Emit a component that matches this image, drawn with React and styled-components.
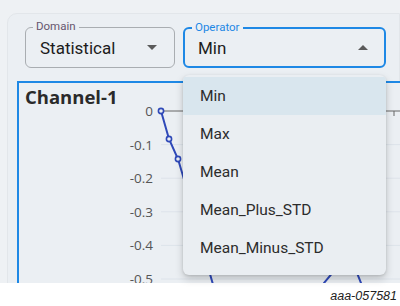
import React from 'react'
import styled, { createGlobalStyle } from 'styled-components'

const Global = createGlobalStyle`
  html, body { margin: 0; padding: 0; background: #ffffff; }
  body { width: 400px; height: 306px; overflow: hidden; font-family: Roboto, "Liberation Sans", sans-serif; }
`

const Page = styled.div`
  position: relative;
  width: 400px;
  height: 306px;
  display: flex;
  flex-direction: column;
  overflow: hidden;
`
const Stage = styled.div`
  height: 283px;
  background: #eef1f4;
  padding: 13px 0 0 7px;
  box-sizing: border-box;
  overflow: hidden;
`
const Panel = styled.div`
  height: 300px;
  background: #ebeff3;
  border: 1px solid #e2e6ea;
  border-radius: 10px 0 0 0;
  padding: 13px 0 0 17px;
  box-sizing: border-box;
`
const Row = styled.div`
  display: flex;
  gap: 8px;
  align-items: flex-start;
`
const Field = styled.div`
  position: relative;
  width: ${(p) => p.w}px;
  height: 41px;
  box-sizing: border-box;
  border: ${(p) => (p.active ? '2px solid #1e88e5' : '1px solid #a9adb1')};
  border-radius: 6px;
  display: flex;
  align-items: center;
  justify-content: space-between;
  padding: 0 ${(p) => (p.active ? 16 : 17)}px 0 ${(p) => (p.active ? 13 : 14)}px;
`
const Legend = styled.span`
  position: absolute;
  top: -9px;
  left: 7px;
  padding: 0 3px;
  background: #ebeff3;
  font-size: 11.5px;
  line-height: 14px;
  color: ${(p) => (p.active ? '#1e88e5' : '#66566e')};
`
const Value = styled.span`
  font-size: 17px;
  color: #1c1c1c;
  padding-top: 1px;
`
const Caret = styled.span`
  width: 0;
  height: 0;
  border-left: 5px solid transparent;
  border-right: 5px solid transparent;
  ${(p) => (p.up ? 'border-bottom: 5px solid #5a5a5a;' : 'border-top: 5px solid #5a5a5a;')}
`
const ChartBox = styled.div`
  margin: 13px 0 0 -8px;
  width: 400px;
  height: 240px;
  border-top: 2px solid #1e88e5;
  border-left: 2px solid #1e88e5;
  background: #ebeff3;
  position: relative;
`
const Title = styled.div`
  position: absolute;
  left: 6px;
  top: 1px;
  font-family: "Open Sans", "DejaVu Sans", sans-serif;
  font-weight: 700;
  font-size: 18.5px;
  color: #2a2a2a;
`
const Footer = styled.div`
  height: 23px;
  background: #ffffff;
  display: flex;
  justify-content: flex-end;
  align-items: flex-end;
  padding: 0 3px 3px 0;
  box-sizing: border-box;
  font-family: "Liberation Sans", Arial, sans-serif;
  font-style: italic;
  font-size: 12.5px;
  color: #222;
`
const Menu = styled.div`
  position: absolute;
  left: 183px;
  top: 75px;
  width: 203px;
  height: 200px;
  background: #eaeef2;
  border-radius: 6px;
  box-shadow: 0 4px 8px rgba(0, 0, 0, 0.18), 0 1px 3px rgba(0, 0, 0, 0.12);
  padding-top: 2px;
  box-sizing: border-box;
  overflow: hidden;
`
const Item = styled.div`
  height: 38px;
  display: flex;
  align-items: center;
  padding-left: 17px;
  font-size: 15.5px;
  color: #2c2c2c;
  background: ${(p) => (p.selected ? '#d9e6ee' : 'transparent')};
`

const labels = ['0', '-0.1', '-0.2', '-0.3', '-0.4', '-0.5']
// chart-local coords: box left at x=18, top at y=84 (inside border)
const y0 = 28
const step = 33.6
const pts = [
  [142, 28], [150, 56], [159, 76], [172, 120], [185, 170], [195, 205], [205, 230],
  [240, 250], [290, 240], [305, 200], [330, 170], [350, 220], [362, 250], [380, 240],
]

function Chart() {
  const line = pts.map((p) => p.join(',')).join(' ')
  return (
    <svg width="398" height="238" style={{ display: 'block' }}>
      {labels.map((l, i) => (
        <g key={l}>
          {i > 0 && (
            <line x1="142" x2="398" y1={y0 + i * step} y2={y0 + i * step} stroke="#dde3ea" strokeWidth="1" />
          )}
          <text
            x="134"
            y={y0 + i * step + 5}
            textAnchor="end"
            fontFamily='"Open Sans", "DejaVu Sans", sans-serif'
            fontSize="13.5"
            fill="#555"
          >
            {l}
          </text>
        </g>
      ))}
      <line x1="142" x2="398" y1={y0} y2={y0} stroke="#666" strokeWidth="1" />
      <line x1="375" x2="375" y1={y0} y2={y0 + 5} stroke="#666" strokeWidth="1" />
      <polyline points={line} fill="none" stroke="#2f49b8" strokeWidth="2" />
      {pts.slice(0, 3).map(([x, y]) => (
        <circle key={x} cx={x} cy={y} r="2.6" fill="#ebeff3" stroke="#2f49b8" strokeWidth="1.6" />
      ))}
    </svg>
  )
}

export default function App() {
  return (
    <Page>
      <Global />
      <Stage>
        <Panel>
          <Row>
            <Field w={150}>
              <Legend>Domain</Legend>
              <Value>Statistical</Value>
              <Caret />
            </Field>
            <Field w={203} active>
              <Legend active>Operator</Legend>
              <Value>Min</Value>
              <Caret up />
            </Field>
          </Row>
          <ChartBox>
            <Title>Channel-1</Title>
            <Chart />
          </ChartBox>
        </Panel>
      </Stage>
      <Footer>aaa-057581</Footer>
      <Menu>
        <Item selected>Min</Item>
        <Item>Max</Item>
        <Item>Mean</Item>
        <Item>Mean_Plus_STD</Item>
        <Item>Mean_Minus_STD</Item>
      </Menu>
    </Page>
  )
}
